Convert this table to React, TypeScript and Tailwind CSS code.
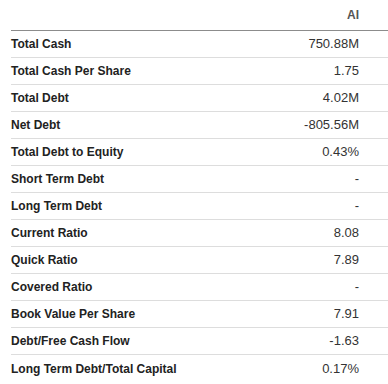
import React from 'react';

const rows: [string, string][] = [
  ['Total Cash', '750.88M'],
  ['Total Cash Per Share', '1.75'],
  ['Total Debt', '4.02M'],
  ['Net Debt', '-805.56M'],
  ['Total Debt to Equity', '0.43%'],
  ['Short Term Debt', '-'],
  ['Long Term Debt', '-'],
  ['Current Ratio', '8.08'],
  ['Quick Ratio', '7.89'],
  ['Covered Ratio', '-'],
  ['Book Value Per Share', '7.91'],
  ['Debt/Free Cash Flow', '-1.63'],
  ['Long Term Debt/Total Capital', '0.17%'],
];

export default function App(): React.ReactElement {
  return (
    <div className="w-[388px] h-[384px] bg-white pl-[11px] font-['Liberation_Sans',Arial,sans-serif] overflow-hidden">
      {/* Header */}
      <div className="h-[31px] flex items-center justify-end pr-[29px] border-b border-[#8c8c8c]">
        <span className="text-[12px] font-bold text-[#555]">AI</span>
      </div>

      {/* Rows */}
      {rows.map(([label, value], i) => (
        <div
          key={label}
          className={`h-[27px] flex items-center justify-between pr-[29px] ${
            i < rows.length - 1 ? 'border-b border-[#dddddd]' : ''
          }`}
        >
          <span className="text-[12px] font-bold text-[#222]">{label}</span>
          <span className="text-[13px] text-[#333]">{value}</span>
        </div>
      ))}
    </div>
  );
}
